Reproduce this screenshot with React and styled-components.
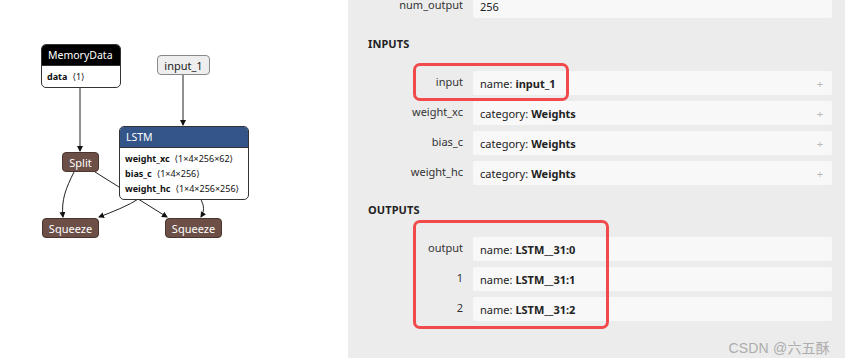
import React from "react";
import styled, { createGlobalStyle } from "styled-components";

const Global = createGlobalStyle`
  html, body { margin: 0; padding: 0; background: #fff; }
  body { font-family: "Noto Sans", "DejaVu Sans", sans-serif; color: #222; overflow: hidden; }
`;

const Page = styled.div`
  width: 845px;
  height: 364px;
  display: grid;
  grid-template-columns: 348px 1fr;
  overflow: hidden;
  position: relative;
`;

const Canvas = styled.div`
  position: relative;
  background: #fff;
  height: 100%;
`;

const Edges = styled.svg`
  position: absolute;
  left: 0;
  top: 0;
`;

const Node = styled.div`
  position: absolute;
  border-radius: 5px;
  border: 1px solid #333;
  background: #fff;
  overflow: hidden;
  box-sizing: border-box;
`;

const NodeHead = styled.div`
  height: 20px;
  line-height: 20px;
  padding: 0 6px;
  background: ${(p) => p.$bg};
  color: #fff;
  font-size: 10.5px;
  white-space: nowrap;
`;

const NodeBody = styled.div`
  padding: 3px 5px 3px;
  display: flex;
  flex-direction: column;
  border-top: 1px solid #333;
`;

const Attr = styled.div`
  font-size: 9px;
  line-height: 15px;
  white-space: nowrap;
  color: #111;
  b { font-weight: 700; }
  span { margin-left: 5px; }
`;

const Pill = styled.div`
  position: absolute;
  height: 20px;
  box-sizing: border-box;
  border-radius: 4px;
  display: flex;
  align-items: center;
  justify-content: center;
  font-size: 11px;
  white-space: nowrap;
  background: ${(p) => (p.$light ? "#eeeeee" : "#6c4f47")};
  color: ${(p) => (p.$light ? "#222" : "#fff")};
  border: 1px solid ${(p) => (p.$light ? "#888" : "#4a3530")};
`;

const Panel = styled.div`
  background: #ececec;
  height: 100%;
  padding-right: 13px;
  box-sizing: border-box;
  display: flex;
  flex-direction: column;
  margin-top: -6px;
`;

const Heading = styled.div`
  font-size: 11px;
  font-weight: 700;
  color: #222;
  line-height: 20px;
  padding-left: 20px;
  margin: ${(p) => (p.$first ? "16px" : "15px")} 0 17px;
  letter-spacing: 0.1px;
`;

const Group = styled.div`
  position: relative;
  display: flex;
  flex-direction: column;
  gap: 6px;
`;

const Row = styled.div`
  display: grid;
  grid-template-columns: 115px 1fr;
  column-gap: 10px;
  align-items: center;
`;

const Label = styled.div`
  text-align: right;
  font-size: 11px;
  color: #333;
  line-height: 22px;
  margin-top: -2px;
`;

const Field = styled.div`
  height: 24px;
  background: #f8f8f8;
  border-radius: 2px;
  display: flex;
  align-items: center;
  padding: 0 7px;
  font-size: 11px;
  color: #222;
  b { font-weight: 700; margin-left: 3px; }
`;

const Plus = styled.span`
  margin-left: auto;
  color: #b8b8b8;
  font-size: 11px;
  margin-right: 2px;
`;

const Highlight = styled.div`
  position: absolute;
  left: 65px;
  top: ${(p) => p.$top}px;
  bottom: ${(p) => p.$bottom}px;
  width: ${(p) => p.$w}px;
  border: 3px solid #f04a4a;
  border-radius: 7px;
  box-sizing: border-box;
  pointer-events: none;
`;

const Watermark = styled.div`
  position: absolute;
  right: 15px;
  bottom: 7px;
  font-family: "Liberation Sans", "Noto Sans CJK SC", sans-serif;
  font-size: 14px;
  color: #adadad;
  letter-spacing: 0.2px;
`;

function Graph() {
  return (
    <Canvas>
      <Edges width="348" height="364" viewBox="0 0 348 364">
        <defs>
          <marker id="arr" markerWidth="6" markerHeight="6" refX="5" refY="3" orient="auto" markerUnits="userSpaceOnUse">
            <path d="M0,0 L6,3 L0,6 z" fill="#111" />
          </marker>
        </defs>
        <g stroke="#222" strokeWidth="1" fill="none">
          <path d="M80,86 L80,151" markerEnd="url(#arr)" />
          <path d="M183,75 L183,125" markerEnd="url(#arr)" />
          <path d="M74,172 C66,188 61,200 63,217" markerEnd="url(#arr)" />
          <path d="M95,172 L167,217" markerEnd="url(#arr)" />
          <path d="M140,198 C128,206 112,212 99,217" markerEnd="url(#arr)" />
          <path d="M200,198 C205,206 204,212 201,217" markerEnd="url(#arr)" />
        </g>
      </Edges>
      <Node style={{ left: 41, top: 44, width: 80 }}>
        <NodeHead $bg="#000">MemoryData</NodeHead>
        <NodeBody>
          <Attr><b>data</b><span>⟨1⟩</span></Attr>
        </NodeBody>
      </Node>
      <Pill $light style={{ left: 157, top: 55, width: 53 }}>input_1</Pill>
      <Node style={{ left: 119, top: 126, width: 130 }}>
        <NodeHead $bg="#335588">LSTM</NodeHead>
        <NodeBody>
          <Attr><b>weight_xc</b><span>⟨1×4×256×62⟩</span></Attr>
          <Attr><b>bias_c</b><span>⟨1×4×256⟩</span></Attr>
          <Attr><b>weight_hc</b><span>⟨1×4×256×256⟩</span></Attr>
        </NodeBody>
      </Node>
      <Pill style={{ left: 62, top: 152, width: 37 }}>Split</Pill>
      <Pill style={{ left: 42, top: 218, width: 57 }}>Squeeze</Pill>
      <Pill style={{ left: 165, top: 218, width: 57 }}>Squeeze</Pill>
    </Canvas>
  );
}

function PropRow({ label, pre, value, plus }) {
  return (
    <Row>
      <Label>{label}</Label>
      <Field>
        {pre}
        {value && <b>{value}</b>}
        {plus && <Plus>+</Plus>}
      </Field>
    </Row>
  );
}

export default function App() {
  return (
    <>
      <Global />
      <Page>
        <Graph />
        <Panel>
          <Group>
            <PropRow label="num_output" pre="256" />
          </Group>
          <Heading $first>INPUTS</Heading>
          <Group>
            <Highlight $top={-8} $bottom={84} $w={156} />
            <PropRow label="input" pre="name:" value="input_1" plus />
            <PropRow label="weight_xc" pre="category:" value="Weights" plus />
            <PropRow label="bias_c" pre="category:" value="Weights" plus />
            <PropRow label="weight_hc" pre="category:" value="Weights" plus />
          </Group>
          <Heading>OUTPUTS</Heading>
          <Group>
            <Highlight $top={-17} $bottom={-8} $w={196} />
            <PropRow label="output" pre="name:" value="LSTM__31:0" />
            <PropRow label="1" pre="name:" value="LSTM__31:1" />
            <PropRow label="2" pre="name:" value="LSTM__31:2" />
          </Group>
        </Panel>
        <Watermark>CSDN @六五酥</Watermark>
      </Page>
    </>
  );
}
